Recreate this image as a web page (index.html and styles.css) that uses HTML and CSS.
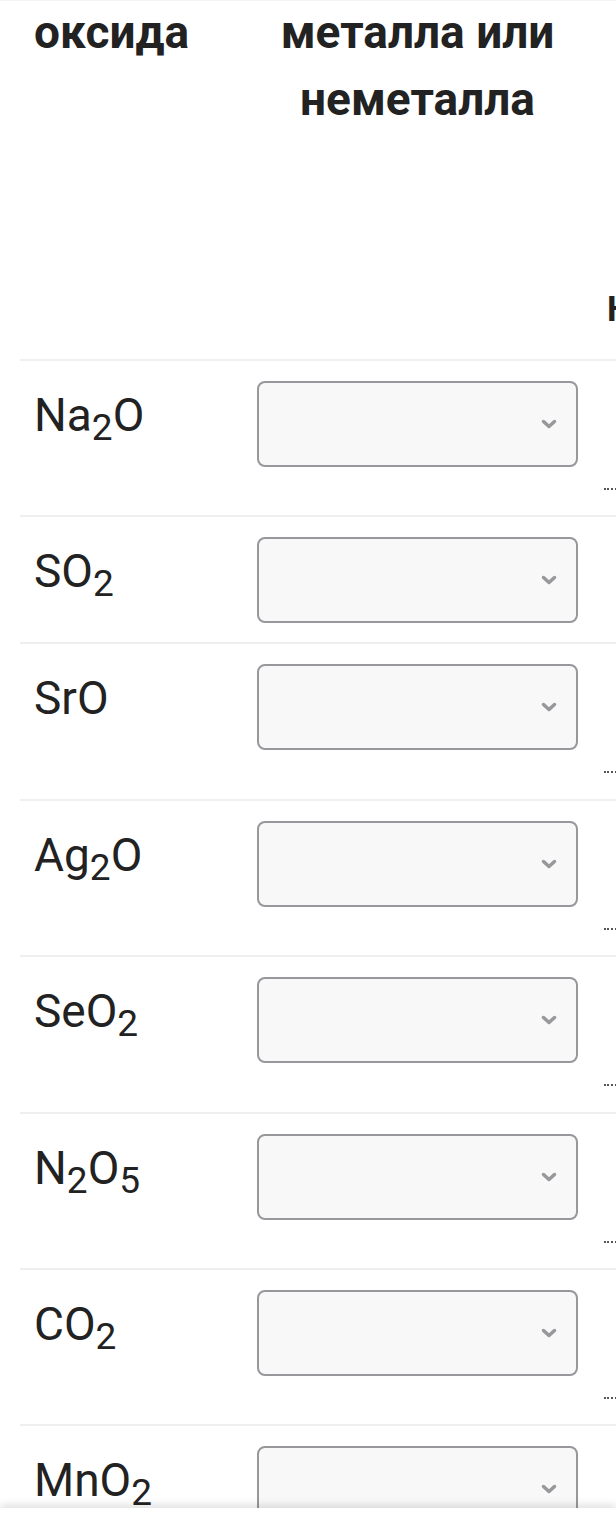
FILE: index.html
```html
<!DOCTYPE html>
<html lang="ru">
<head>
<meta charset="utf-8">
<title>Оксиды</title>
<link rel="stylesheet" href="styles.css">
</head>
<body>
<div class="viewport">
  <div class="table">
    <div class="row head">
      <div class="c1 th">оксида</div>
      <div class="c2 th">металла или неметалла</div>
      <div class="c3 th th3">Н</div>
    </div>

    <div class="row">
      <div class="c1 f">Na<sub>2</sub>O</div>
      <div class="c2"><div class="sel"><svg width="16" height="10" viewBox="0 0 16 10"><polyline points="2.5,2.5 8,7.5 13.5,2.5" /></svg></div></div>
      <div class="c3"><div class="blank"><span class="dots"></span></div></div>
    </div>

    <div class="row">
      <div class="c1 f">SO<sub>2</sub></div>
      <div class="c2"><div class="sel"><svg width="16" height="10" viewBox="0 0 16 10"><polyline points="2.5,2.5 8,7.5 13.5,2.5" /></svg></div></div>
      <div class="c3"></div>
    </div>

    <div class="row">
      <div class="c1 f">SrO</div>
      <div class="c2"><div class="sel"><svg width="16" height="10" viewBox="0 0 16 10"><polyline points="2.5,2.5 8,7.5 13.5,2.5" /></svg></div></div>
      <div class="c3"><div class="blank"><span class="dots"></span></div></div>
    </div>

    <div class="row">
      <div class="c1 f">Ag<sub>2</sub>O</div>
      <div class="c2"><div class="sel"><svg width="16" height="10" viewBox="0 0 16 10"><polyline points="2.5,2.5 8,7.5 13.5,2.5" /></svg></div></div>
      <div class="c3"><div class="blank"><span class="dots"></span></div></div>
    </div>

    <div class="row">
      <div class="c1 f">SeO<sub>2</sub></div>
      <div class="c2"><div class="sel"><svg width="16" height="10" viewBox="0 0 16 10"><polyline points="2.5,2.5 8,7.5 13.5,2.5" /></svg></div></div>
      <div class="c3"><div class="blank"><span class="dots"></span></div></div>
    </div>

    <div class="row">
      <div class="c1 f">N<sub>2</sub>O<sub>5</sub></div>
      <div class="c2"><div class="sel"><svg width="16" height="10" viewBox="0 0 16 10"><polyline points="2.5,2.5 8,7.5 13.5,2.5" /></svg></div></div>
      <div class="c3"><div class="blank"><span class="dots"></span></div></div>
    </div>

    <div class="row">
      <div class="c1 f">CO<sub>2</sub></div>
      <div class="c2"><div class="sel"><svg width="16" height="10" viewBox="0 0 16 10"><polyline points="2.5,2.5 8,7.5 13.5,2.5" /></svg></div></div>
      <div class="c3"><div class="blank"><span class="dots"></span></div></div>
    </div>

    <div class="row">
      <div class="c1 f">MnO<sub>2</sub></div>
      <div class="c2"><div class="sel"><svg width="16" height="10" viewBox="0 0 16 10"><polyline points="2.5,2.5 8,7.5 13.5,2.5" /></svg></div></div>
      <div class="c3"><div class="blank"><span class="dots"></span></div></div>
    </div>
  </div>
</div>
<div class="bottombar"></div>
</body>
</html>
```

FILE: styles.css
```css
html, body {
  margin: 0;
  padding: 0;
  background: #ffffff;
  overflow: hidden;
  height: 1528px;
}

body {
  font-family: Roboto, "Noto Sans", "Liberation Sans", sans-serif;
  color: #222222;
}

.viewport {
  width: 616px;
  height: 1528px;
  overflow: hidden;
  border-top: 1px solid #f4f4f4;
  box-sizing: border-box;
}

.table {
  margin-left: 20px;
  width: 800px;
}

.row {
  display: grid;
  grid-template-columns: 217px 361px 222px;
  border-bottom: 2px solid #efefef;
}

.head {
  height: 358px;
}

.th {
  font-weight: 700;
  font-size: 46px;
  line-height: 67px;
  margin-top: -2px;
}

.c1.th {
  padding-left: 14px;
}

.head .c2 {
  text-align: center;
  padding: 0 20px;
}

.th3 {
  align-self: end;
  font-size: 35px;
  line-height: 45px;
  margin-top: 0;
}

.head .c3 {
  padding: 0 0 27px 9px;
}

.f {
  font-size: 46px;
  line-height: 56px;
  padding: 26px 0 0 14px;
}

.f sub {
  font-size: 37px;
  vertical-align: -9px;
  line-height: 0;
}

.c2 {
  padding: 20px 20px 19px;
}

.sel {
  height: 86px;
  box-sizing: border-box;
  border: 2px solid #98989c;
  border-radius: 8px;
  background: #f8f8f8;
  display: flex;
  align-items: center;
  justify-content: flex-end;
  padding-right: 19px;
}

.sel svg polyline {
  fill: none;
  stroke: #98989c;
  stroke-width: 3.5;
  stroke-linecap: round;
  stroke-linejoin: round;
}

.c3 {
  padding: 21px 0 18px 6px;
}

.blank {
  height: 115.4px;
  box-sizing: border-box;
  padding-top: 106px;
}

.dots {
  display: block;
  width: 40px;
  border-top: 2px dotted #555555;
}

.bottombar {
  position: fixed;
  left: 0;
  right: 0;
  bottom: 0;
  height: 20px;
  background: #ffffff;
  box-shadow: 0 -3px 9px rgba(0, 0, 0, 0.13);
}
```
